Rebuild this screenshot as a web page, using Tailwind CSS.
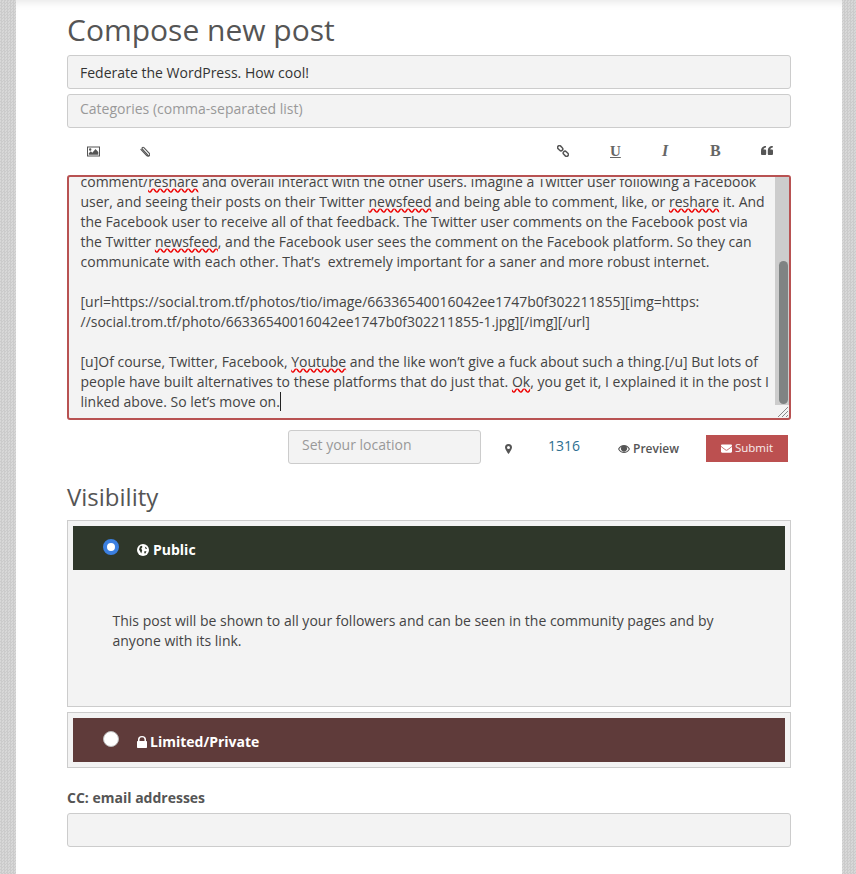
<!DOCTYPE html>
<html lang="en">
<head>
    <meta charset="UTF-8">
    <meta name="viewport" content="width=device-width, initial-scale=1.0">
    <title>Compose new post</title>
    <script src="https://cdn.jsdelivr.net/npm/@tailwindcss/browser@4"></script>
</head>
<body class="h-[874px] overflow-hidden bg-[repeating-conic-gradient(#cbcbcb_0_25%,#d8d8d8_0_50%)] bg-size-[3px_3px] font-['Open_Sans',sans-serif] text-sm text-[#444]">
    <main class="mr-[14px] ml-4 h-[874px] bg-white px-[51px] pt-[9px] shadow-[inset_0_8px_8px_-6px_rgba(0,0,0,0.1)]">
        <h2 class="h-[41px] text-[30px] leading-[41px] text-[#555]">Compose new post</h2>

        <!-- Title and categories -->
        <div class="mt-[5px] flex flex-col gap-[5px]">
            <input type="text" value="Federate the WordPress. How cool!" class="h-[34px] w-full rounded-[3px] border border-[#ccc] bg-[#f3f3f3] px-3 text-[#333] outline-none">
            <input type="text" placeholder="Categories (comma-separated list)" class="h-[34px] w-full rounded-[3px] border border-[#ccc] bg-[#f3f3f3] px-3 pb-[5px] outline-none placeholder:text-[#999]">
        </div>

        <!-- Editor toolbar -->
        <div class="flex h-[47px] items-center justify-between text-[#555]">
            <div class="flex items-center">
                <svg class="ml-5 h-[11px] w-[13px]" viewBox="0 0 13 11" fill="#555"><path fill-rule="evenodd" d="M0 .5h13v10H0zM1 1.500v8h11v-8zM1.800 8.700V7.300l2-2 1.500 1.400 3.200-3.600 2.800 3v2.600zM2 3.500a1.200 1.200 0 1 0 2.400 0 1.200 1.200 0 1 0-2.400 0z"/></svg>
                <svg class="ml-[39px] h-3 w-[11px]" viewBox="0 0 11 12" fill="none" stroke="#555" stroke-width="1.100"><path d="M9.600 9.800 3.400 3.200c-1-1.100.4-2.600 1.500-1.600l5.200 5.600c1.700 1.900-.7 4.200-2.400 2.400L1.600 3.100"/></svg>
            </div>
            <div class="flex items-center">
                <svg class="mb-[2px] h-3 w-3" viewBox="0 0 12 12" fill="none" stroke="#555" stroke-width="1.500"><rect x="-2.900" y="-1.800" width="5.800" height="3.600" rx="1.800" transform="translate(3.200 3.200) rotate(45)"/><rect x="-2.900" y="-1.800" width="5.800" height="3.600" rx="1.800" transform="translate(8.800 8.800) rotate(45)"/></svg>
                <span class="ml-[41px] w-[12px] font-['Liberation_Serif',serif] text-[15px] font-bold text-[#666] underline">U</span>
                <span class="ml-[40px] w-[12px] font-['Liberation_Serif',serif] text-[16px] font-bold text-[#666] italic">I</span>
                <span class="ml-[36px] w-[12px] font-['Liberation_Serif',serif] text-[16px] font-bold text-[#666]">B</span>
                <svg class="mr-[18px] mb-[2px] ml-[39px] h-[9px] w-3" viewBox="0 0 12 9" fill="#555"><path d="M0 5c0-3 1.500-5 5-5v1.500C3.500 1.500 2.500 2.500 2.500 3.500H4c.6 0 1.200.5 1.200 1.200v3c0 .7-.5 1.300-1.200 1.300H1.200C.5 9 0 8.400 0 7.700zM6.800 5c0-3 1.500-5 5-5v1.500c-1.500 0-2.500 1-2.500 2h1.500c.6 0 1.200.5 1.200 1.200v3c0 .7-.5 1.300-1.200 1.300H8c-.7 0-1.200-.6-1.200-1.300z"/></svg>
            </div>
        </div>

        <!-- Post body, scrolled part way down -->
        <div class="relative h-[245px] rounded-[3px] border-2 border-[#b85252] bg-[#f3f3f3] pt-[2px] leading-5 whitespace-nowrap text-[#444]">
            <div class="h-[239px] overflow-hidden pl-[11.5px]">
                <div class="-mt-[7px]">
                    <div>comment/<span class="underline decoration-[#e00] decoration-wavy">reshare</span> and overall interact with the other users. Imagine a Twitter user following a Facebook</div>
                    <div>user, and seeing their posts on their Twitter <span class="underline decoration-[#e00] decoration-wavy">newsfeed</span> and being able to comment, like, or <span class="underline decoration-[#e00] decoration-wavy">reshare</span> it. And</div>
                    <div>the Facebook user to receive all of that feedback. The Twitter user comments on the Facebook post via</div>
                    <div>the Twitter <span class="underline decoration-[#e00] decoration-wavy">newsfeed</span>, and the Facebook user sees the comment on the Facebook platform. So they can</div>
                    <div class="whitespace-pre">communicate with each other. That’s  extremely important for a saner and more robust internet.</div>
                    <div class="h-5"></div>
                    <div>[url=https://social.trom.tf/photos/tio/image/66336540016042ee1747b0f302211855][img=https:</div>
                    <div>//social.trom.tf/photo/66336540016042ee1747b0f302211855-1.jpg][/img][/url]</div>
                    <div class="h-5"></div>
                    <div>[u]Of course, Twitter, Facebook, <span class="underline decoration-[#e00] decoration-wavy">Youtube</span> and the like won’t give a fuck about such a thing.[/u] But lots of</div>
                    <div>people have built alternatives to these platforms that do just that. <span class="underline decoration-[#e00] decoration-wavy">Ok</span>, you get it, I explained it in the post I</div>
                    <div>linked above. So let’s move on.<span class="border-l border-[#222]"></span></div>
                </div>
            </div>
            <!-- scrollbar and resize grip -->
            <div class="absolute top-0 right-0 h-[228px] w-[14px] bg-[#ccc]">
                <div class="absolute top-[84px] right-[1px] bottom-[1px] w-[9px] rounded-full bg-[#7f8383]"></div>
            </div>
            <svg class="absolute right-0 bottom-0 h-3 w-3" viewBox="0 0 12 12" stroke="#888" stroke-width="1"><path d="M1 11 11 1M5 11l6-6M9 11l2-2"/></svg>
        </div>

        <!-- Location, counter and actions -->
        <div class="mt-[10px] flex h-[34px] items-center">
            <input type="text" placeholder="Set your location" class="ml-[221px] h-[34px] w-[193px] rounded-[3px] border border-[#ccc] bg-[#f3f3f3] pr-3 pb-[5px] pl-[13px] outline-none placeholder:text-[#999]">
            <svg class="mt-[3px] ml-6 h-[10px] w-[7px]" viewBox="0 0 7 10" fill="#555"><path fill-rule="evenodd" d="M3.500 0A3.500 3.500 0 0 1 7 3.500C7 5.200 4.600 8.600 3.500 10 2.400 8.600 0 5.200 0 3.500A3.500 3.500 0 0 1 3.500 0zm0 2a1.500 1.500 0 1 0 0 3 1.500 1.500 0 1 0 0-3z"/></svg>
            <span class="mb-[3px] ml-[36px] text-[#2d6f91]">1316</span>
            <span class="mt-[3px] ml-[38px] flex items-center text-xs font-semibold text-[#555]">
                <svg class="mr-[3px] h-[8px] w-3" viewBox="0 0 12 8" fill="#555"><path fill-rule="evenodd" d="M0 4c1.400-2.500 3.500-4 6-4s4.600 1.500 6 4c-1.400 2.500-3.500 4-6 4S1.400 6.500 0 4zm1.200 0C2.200 5.700 3.800 7 6 7s3.800-1.300 4.800-3C10 2.800 9.100 1.900 8.200 1.500a3 3 0 1 1-4.400 0C2.900 1.900 2 2.800 1.200 4z"/></svg>
                Preview
            </span>
            <button class="mt-[3px] ml-[27px] flex h-[27px] w-[82px] items-center justify-center gap-[3px] bg-[#bc5050] text-[11.5px] text-white/90">
                <svg class="h-[11px] w-[11px]" viewBox="0 0 512 512" fill="#fff"><path d="M502.3 190.8c3.900-3.100 9.700-.2 9.700 4.700V400c0 26.500-21.500 48-48 48H48c-26.500 0-48-21.500-48-48V195.600c0-5 5.700-7.800 9.700-4.700 22.400 17.400 52.100 39.500 154.100 113.600 21.100 15.400 56.700 47.800 92.200 47.600 35.700.3 72-32.800 92.300-47.600 102-74.100 131.600-96.300 154-113.700zM256 320c23.200.4 56.600-29.200 73.400-41.400 132.700-96.300 142.800-104.700 173.400-128.700 5.800-4.500 9.200-11.500 9.200-18.900v-19c0-26.500-21.500-48-48-48H48C21.500 64 0 85.500 0 112v19c0 7.400 3.400 14.300 9.200 18.900 30.600 23.900 40.700 32.400 173.400 128.700 16.800 12.200 50.200 41.800 73.400 41.400z"/></svg>
                Submit
            </button>
        </div>

        <!-- Visibility -->
        <h3 class="mt-[16px] h-[33px] text-2xl leading-[33px] text-[#555]">Visibility</h3>

        <section class="mt-[7px] h-[187px] border border-[#ccc] bg-[#f3f3f3] p-[5px]">
            <label class="flex h-11 bg-[#2f372a] pl-[30px] text-white">
                <input type="radio" name="visibility" checked class="mt-[13px] size-4 appearance-none rounded-full border-[4px] border-[#3b7fe0] bg-white">
                <span class="mt-[14px] ml-[18px] flex h-5 items-center font-bold">
                    <svg class="mr-1 size-3" viewBox="0 0 12 12"><circle cx="6" cy="6" r="6" fill="#fff"/><path fill="#2f372a" d="M3 2.600 4.800 1.800 5.500 3 4.300 4.400 5.200 6.600 4.200 9.400 3.200 7.400 2 5.400zM7.800 2.400l1.800 1.300.4 1.400-1.500-.4zM7.300 7.300h2.200L8.400 9.600 7.300 9.200z"/></svg>
                    Public
                </span>
            </label>
            <p class="mt-[41px] pl-[39.5px] leading-5 text-[#444]">This post will be shown to all your followers and can be seen in the community pages and by<br>anyone with its link.</p>
        </section>

        <section class="mt-[5px] h-[56px] border border-[#ccc] bg-[#f3f3f3] p-[5px]">
            <label class="flex h-11 bg-[#5f3b3a] pl-[30px] text-white">
                <input type="radio" name="visibility" class="mt-[13px] size-4 appearance-none rounded-full border border-[#bbb] bg-white">
                <span class="mt-[14px] ml-[18px] flex h-5 items-center font-bold">
                    <svg class="mr-[3px] h-3 w-[10px]" viewBox="0 0 10 12" fill="#fff"><path fill-rule="evenodd" d="M1 5V3.500a4 3.500 0 0 1 8 0V5h.300c.4 0 .7.300.7.700v5.600c0 .4-.3.700-.7.700H.7c-.4 0-.7-.3-.7-.7V5.700C0 5.300.3 5 .7 5zm1.500 0h5V3.500a2.500 2.300 0 0 0-5 0z"/></svg>
                    Limited/Private
                </span>
            </label>
        </section>

        <!-- CC -->
        <label class="mt-5 block h-5 leading-5 font-bold text-[#555]">CC: email addresses</label>
        <input type="text" class="mt-[5px] h-[34px] w-full rounded-[3px] border border-[#ccc] bg-[#f3f3f3] px-3 outline-none">
    </main>
</body>
</html>
